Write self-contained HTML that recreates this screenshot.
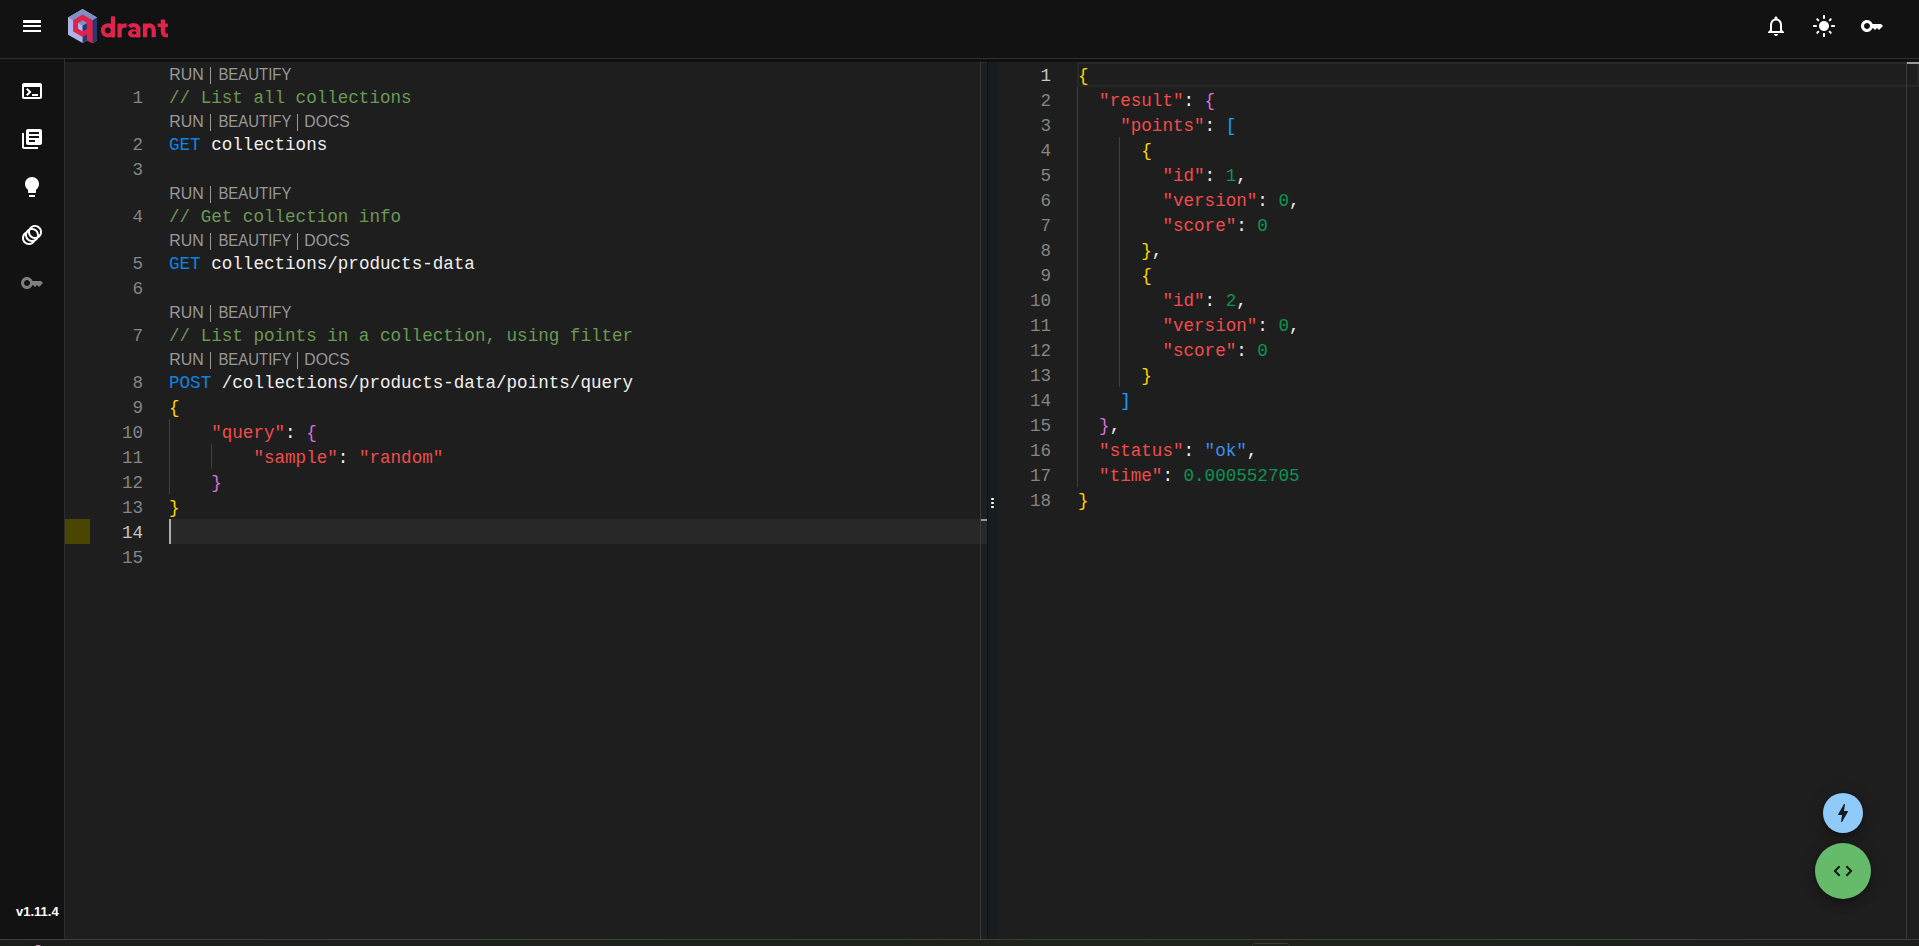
<!DOCTYPE html>
<html>
<head>
<meta charset="utf-8">
<style>
html,body{margin:0;padding:0;}
body{width:1919px;height:946px;overflow:hidden;background:#121212;position:relative;font-family:"Liberation Sans",sans-serif;}
.abs{position:absolute;}
#header{left:0;top:0;width:1919px;height:58px;background:#121212;}
#hline{left:0;top:58px;width:1919px;height:1px;background:#2e2e2e;}
#gap{left:65px;top:59px;width:1854px;height:3px;background:#101010;}
#sidebar{left:0;top:59px;width:64px;height:880px;background:#121212;}
#sline{left:64px;top:59px;width:1px;height:880px;background:#2e2e2e;}
#edL{left:65px;top:62px;width:922px;height:877px;background:#1e1e1e;overflow:hidden;}
#edR{left:998px;top:62px;width:921px;height:877px;background:#1e1e1e;overflow:hidden;}
#gapLR{left:987px;top:62px;width:1px;height:877px;background:#121212;}
#resizer{left:988px;top:62px;width:10px;height:877px;background:#191c1f;}
#bottom{left:0;top:939px;width:1919px;height:7px;background:linear-gradient(90deg,#1b1e1b 0%,#1d211b 40%,#1e231b 60%,#1b1e1b 100%);}
#bline{left:0;top:939px;width:1919px;height:1px;background:#3b403b;}
.code{position:absolute;white-space:pre;font-family:"Liberation Mono",monospace;font-size:17.58px;line-height:25px;height:25px;color:#f0f0f0;}
.ln{position:absolute;white-space:pre;font-family:"Liberation Mono",monospace;font-size:17.58px;line-height:25px;height:25px;color:#858585;text-align:right;width:60px;}
.cm{color:#6a9955}
.kw{color:#0e84e0}
.k{color:#f14c4c}
.sv{color:#3a8ef0}
.nu{color:#0b9552}
.b1{color:#ffd700}
.b2{color:#da70d6}
.b3{color:#179fff}
.act{color:#c6c6c6}
.guide{position:absolute;width:1px;background:#404040;}
svg{position:absolute;overflow:visible;}
</style>
</head>
<body>
<div id="header" class="abs"></div>
<div id="hline" class="abs"></div>
<div id="gap" class="abs"></div>
<div id="sidebar" class="abs"></div>
<div id="sline" class="abs"></div>

<!-- header icons -->
<svg style="left:20px;top:14px" width="24" height="24" viewBox="0 0 24 24"><path fill="#fff" d="M3 18h18v-2H3v2zm0-5h18v-2H3v2zm0-6v2h18V6H3z"/></svg>

<!-- logo -->
<svg style="left:0;top:0" width="200" height="58" viewBox="0 0 200 58">
  <polygon fill="#acb5e8" points="82.6,9 97,17.4 97,40.2 92.7,43 87,40.4 82.6,42.9 68,34.8 68,17.4"/>
  <polygon fill="#8090c6" points="82.6,9 97,17.4 82.6,25.8 68,17.4"/>
  <polygon fill="#26386c" points="97,17.4 97,40.2 92.7,43 87,40.4 82.6,42.9 82.6,25.8"/>
  <path fill="#e0234d" fill-rule="evenodd" d="M82.6,14.6 L92.6,20.2 L92.6,43 L87,40.4 L87,34.3 L82.6,36.9 L73.1,31.4 L73.1,20.2 Z M82.6,20.6 L87,23.2 L87,28.6 L82.6,31.2 L78,28.6 L78,23.2 Z"/>
  <polygon fill="#8090c6" points="82.6,20.6 87,23.2 82.6,25.8 78,23.2"/>
  <polygon fill="#acb5e8" points="78,23.2 82.6,25.8 82.6,31.2 78,28.6"/>
  <polygon fill="#26386c" points="87,23.2 87,28.6 82.6,31.2 82.6,25.8"/>
  <g fill="#dc244c">
    <circle cx="108.1" cy="30.4" r="7.2"/>
    <rect x="110.9" y="16.2" width="4.2" height="21.3" rx="1"/>
    <rect x="117.5" y="23.4" width="4.2" height="14" rx="0.6"/>
    <ellipse cx="133.4" cy="33.4" rx="5.5" ry="4.2"/>
    <rect x="136.2" y="27" width="4.2" height="10.5" rx="0.6"/>
    <rect x="142.9" y="23.4" width="4.2" height="13.9" rx="0.6"/>
    <rect x="151.6" y="29" width="4.2" height="8.3" rx="0.6"/>
    <rect x="160.8" y="19.5" width="4.4" height="13" rx="0.8"/>
    <rect x="157.6" y="23.5" width="10.3" height="3.5" rx="0.6"/>
  </g>
  <circle cx="107.8" cy="30.5" r="2.9" fill="#121212"/>
  <ellipse cx="134.2" cy="32.8" rx="2.2" ry="1.5" fill="#121212"/>
  <g fill="none" stroke="#dc244c" stroke-width="4.2">
    <path d="M119.6,31 C119.6,26.5 122,25.3 126.7,25.3"/>
    <path d="M129.4,26.8 C131.5,24.8 138.3,23.8 138.3,29.5"/>
    <path d="M145,30 C145,23.8 153.7,23.8 153.7,30"/>
    <path d="M163,31.5 C163,35.5 165,35.5 168,35.5"/>
  </g>
</svg>

<svg style="left:1764px;top:14px" width="24" height="24" viewBox="0 0 24 24"><path fill="#fff" d="M12 22c1.1 0 2-.9 2-2h-4c0 1.1.9 2 2 2zm6-6v-5c0-3.07-1.63-5.64-4.5-6.32V4c0-.83-.67-1.5-1.5-1.5s-1.5.67-1.5 1.5v.68C7.64 5.36 6 7.92 6 11v5l-2 2v1h16v-1l-2-2zm-2 1H8v-6c0-2.48 1.51-4.5 4-4.5s4 2.02 4 4.5v6z"/></svg>
<svg style="left:1812px;top:14px" width="24" height="24" viewBox="0 0 24 24"><path fill="#fff" d="M12 7c-2.76 0-5 2.24-5 5s2.24 5 5 5 5-2.24 5-5-2.24-5-5-5zM2 13h2c.55 0 1-.45 1-1s-.45-1-1-1H2c-.55 0-1 .45-1 1s.45 1 1 1zm18 0h2c.55 0 1-.45 1-1s-.45-1-1-1h-2c-.55 0-1 .45-1 1s.45 1 1 1zM11 2v2c0 .55.45 1 1 1s1-.45 1-1V2c0-.55-.45-1-1-1s-1 .45-1 1zm0 18v2c0 .55.45 1 1 1s1-.45 1-1v-2c0-.55-.45-1-1-1s-1 .45-1 1zM5.990 4.580c-.39-.39-1.03-.39-1.41 0-.39.39-.39 1.03 0 1.41l1.06 1.06c.39.39 1.03.39 1.41 0s.39-1.03 0-1.41L5.99 4.58zm12.37 12.37c-.39-.39-1.03-.39-1.41 0-.39.39-.39 1.030 0 1.41l1.06 1.06c.39.39 1.03.39 1.41 0 .39-.39.39-1.03 0-1.41l-1.06-1.06zm1.06-10.96c.39-.39.39-1.03 0-1.41-.39-.39-1.03-.39-1.41 0l-1.06 1.06c-.39.39-.39 1.03 0 1.41s1.03.39 1.41 0l1.06-1.06zM7.05 18.36c.39-.39.39-1.03 0-1.41-.39-.39-1.03-.39-1.41 0l-1.06 1.06c-.39.39-.39 1.03 0 1.41s1.03.39 1.41 0l1.06-1.06z"/></svg>
<svg style="left:1860px;top:14px" width="24" height="24" viewBox="0 0 24 24"><path fill="#fff" d="M21 10h-8.35C11.83 7.67 9.61 6 7 6c-3.31 0-6 2.69-6 6s2.690 6 6 6c2.61 0 4.83-1.67 5.65-4H13l2 2 2-2 2 2 4-4.04L21 10zM7 15c-1.65 0-3-1.35-3-3s1.35-3 3-3 3 1.35 3 3-1.35 3-3 3z"/></svg>

<!-- sidebar icons -->
<svg style="left:20px;top:79px" width="24" height="24" viewBox="0 0 24 24"><path fill="#fff" d="M20 4H4c-1.11 0-2 .9-2 2v12c0 1.1.89 2 2 2h16c1.1 0 2-.9 2-2V6c0-1.1-.89-2-2-2zm0 14H4V8h16v10zm-2-1h-6v-2h6v2zM7.5 17l-1.41-1.41L8.67 13l-2.59-2.59L7.5 9l4 4-4 4z"/></svg>
<svg style="left:20px;top:127px" width="24" height="24" viewBox="0 0 24 24"><path fill="#fff" d="M4 6H2v14c0 1.1.9 2 2 2h14v-2H4V6zm16-4H8c-1.1 0-2 .9-2 2v12c0 1.1.9 2 2 2h12c1.1 0 2-.9 2-2V4c0-1.1-.9-2-2-2zm-1 9H9V9h10v2zm-4 4H9v-2h6v2zm4-8H9V5h10v2z"/></svg>
<svg style="left:20px;top:175px" width="24" height="24" viewBox="0 0 24 24"><path fill="#fff" d="M9 21c0 .55.45 1 1 1h4c.55 0 1-.45 1-1v-1H9v1zm3-19C8.14 2 5 5.14 5 9c0 2.38 1.19 4.47 3 5.74V17c0 .55.45 1 1 1h6c.55 0 1-.45 1-1v-2.26c1.81-1.27 3-3.36 3-5.74 0-3.86-3.14-7-7-7z"/></svg>
<svg style="left:20px;top:223px" width="24" height="24" viewBox="0 0 24 24"><path fill="#fff" fill-rule="evenodd" d="M15 2c-2.71 0-5.05 1.54-6.22 3.78-1.28.67-2.34 1.72-3 3C3.54 9.95 2 12.290 2 15c0 3.87 3.13 7 7 7 2.71 0 5.05-1.54 6.22-3.78 1.28-.67 2.34-1.72 3-3C20.46 14.05 22 11.71 22 9c0-3.87-3.13-7-7-7zM9 20c-2.76 0-5-2.24-5-5 0-1.12.37-2.16 1-3 0 3.87 3.13 7 7 7-.84.63-1.88 1-3 1zm3-3c-2.76 0-5-2.24-5-5 0-1.12.37-2.16 1-3 0 3.86 3.13 6.99 7 7-.84.63-1.88 1-3 1zm4.7-3.3c-.53.19-1.1.3-1.7.3-2.76 0-5-2.24-5-5 0-.6.11-1.17.3-1.7.53-.19 1.1-.3 1.7-.3 2.76 0 5 2.24 5 5 0 .6-.11 1.17-.3 1.7zM12 5A5 5 0 0 1 19 12A7 7 0 0 0 12 5z"/></svg>
<svg style="left:20px;top:271px" width="24" height="24" viewBox="0 0 24 24"><path fill="#7f7f7f" d="M21 10h-8.35C11.83 7.67 9.61 6 7 6c-3.31 0-6 2.69-6 6s2.690 6 6 6c2.61 0 4.83-1.67 5.65-4H13l2 2 2-2 2 2 4-4.04L21 10zM7 15c-1.65 0-3-1.35-3-3s1.35-3 3-3 3 1.35 3 3-1.35 3-3 3z"/></svg>

<div class="abs" style="left:16px;top:903px;font-weight:bold;font-size:13px;color:#fff;line-height:18px;">v1.11.4</div>

<!-- LEFT EDITOR -->
<div id="edL" class="abs"></div>
<div id="gapLR" class="abs"></div>
<div id="resizer" class="abs"></div>
<!-- RIGHT EDITOR -->
<div id="edR" class="abs"></div>
<div class="abs" style="left:169px;top:519px;width:818px;height:25px;background:#282828"></div>
<div class="abs" style="left:65px;top:519px;width:25px;height:25px;background:#4a4500"></div>
<div class="guide" style="left:169px;top:419px;height:75px"></div>
<div class="guide" style="left:211px;top:444px;height:25px"></div>
<div class="ln" style="left:83.00px;top:86px">1</div>
<div class="code" style="left:169px;top:86px"><span class="cm">// List all collections</span></div>
<div class="ln" style="left:83.00px;top:133px">2</div>
<div class="code" style="left:169px;top:133px"><span class="kw">GET</span><span class="w"> collections</span></div>
<div class="ln" style="left:83.00px;top:158px">3</div>
<div class="ln" style="left:83.00px;top:205px">4</div>
<div class="code" style="left:169px;top:205px"><span class="cm">// Get collection info</span></div>
<div class="ln" style="left:83.00px;top:252px">5</div>
<div class="code" style="left:169px;top:252px"><span class="kw">GET</span><span class="w"> collections/products-data</span></div>
<div class="ln" style="left:83.00px;top:277px">6</div>
<div class="ln" style="left:83.00px;top:324px">7</div>
<div class="code" style="left:169px;top:324px"><span class="cm">// List points in a collection, using filter</span></div>
<div class="ln" style="left:83.00px;top:371px">8</div>
<div class="code" style="left:169px;top:371px"><span class="kw">POST</span><span class="w"> /collections/products-data/points/query</span></div>
<div class="ln" style="left:83.00px;top:396px">9</div>
<div class="code" style="left:169px;top:396px"><span class="b1">{</span></div>
<div class="ln" style="left:83.00px;top:421px">10</div>
<div class="code" style="left:169px;top:421px">    <span class="k">"query"</span><span class="w">: </span><span class="b2">{</span></div>
<div class="ln" style="left:83.00px;top:446px">11</div>
<div class="code" style="left:169px;top:446px">        <span class="k">"sample"</span><span class="w">: </span><span class="k">"random"</span></div>
<div class="ln" style="left:83.00px;top:471px">12</div>
<div class="code" style="left:169px;top:471px">    <span class="b2">}</span></div>
<div class="ln" style="left:83.00px;top:496px">13</div>
<div class="code" style="left:169px;top:496px"><span class="b1">}</span></div>
<div class="ln act" style="left:83.00px;top:521px">14</div>
<div class="ln" style="left:83.00px;top:546px">15</div>
<svg class="abs" style="left:0;top:62px" width="400" height="22" viewBox="0 62 400 22"><text x="169.3" y="80.0" fill="#999" font-family="Liberation Sans" font-size="16.6" textLength="34.5" lengthAdjust="spacingAndGlyphs">RUN</text><rect x="210" y="67" width="1" height="17" fill="#999"/><text x="218.4" y="80.0" fill="#999" font-family="Liberation Sans" font-size="16.6" textLength="73.0" lengthAdjust="spacingAndGlyphs">BEAUTIFY</text></svg>
<svg class="abs" style="left:0;top:109px" width="400" height="22" viewBox="0 109 400 22"><text x="169.3" y="127.0" fill="#999" font-family="Liberation Sans" font-size="16.6" textLength="34.5" lengthAdjust="spacingAndGlyphs">RUN</text><rect x="210" y="114" width="1" height="17" fill="#999"/><text x="218.4" y="127.0" fill="#999" font-family="Liberation Sans" font-size="16.6" textLength="73.0" lengthAdjust="spacingAndGlyphs">BEAUTIFY</text><rect x="297" y="114" width="1" height="17" fill="#999"/><text x="304.3" y="127.0" fill="#999" font-family="Liberation Sans" font-size="16.6" textLength="45.5" lengthAdjust="spacingAndGlyphs">DOCS</text></svg>
<svg class="abs" style="left:0;top:181px" width="400" height="22" viewBox="0 181 400 22"><text x="169.3" y="199.0" fill="#999" font-family="Liberation Sans" font-size="16.6" textLength="34.5" lengthAdjust="spacingAndGlyphs">RUN</text><rect x="210" y="186" width="1" height="17" fill="#999"/><text x="218.4" y="199.0" fill="#999" font-family="Liberation Sans" font-size="16.6" textLength="73.0" lengthAdjust="spacingAndGlyphs">BEAUTIFY</text></svg>
<svg class="abs" style="left:0;top:228px" width="400" height="22" viewBox="0 228 400 22"><text x="169.3" y="246.0" fill="#999" font-family="Liberation Sans" font-size="16.6" textLength="34.5" lengthAdjust="spacingAndGlyphs">RUN</text><rect x="210" y="233" width="1" height="17" fill="#999"/><text x="218.4" y="246.0" fill="#999" font-family="Liberation Sans" font-size="16.6" textLength="73.0" lengthAdjust="spacingAndGlyphs">BEAUTIFY</text><rect x="297" y="233" width="1" height="17" fill="#999"/><text x="304.3" y="246.0" fill="#999" font-family="Liberation Sans" font-size="16.6" textLength="45.5" lengthAdjust="spacingAndGlyphs">DOCS</text></svg>
<svg class="abs" style="left:0;top:300px" width="400" height="22" viewBox="0 300 400 22"><text x="169.3" y="318.0" fill="#999" font-family="Liberation Sans" font-size="16.6" textLength="34.5" lengthAdjust="spacingAndGlyphs">RUN</text><rect x="210" y="305" width="1" height="17" fill="#999"/><text x="218.4" y="318.0" fill="#999" font-family="Liberation Sans" font-size="16.6" textLength="73.0" lengthAdjust="spacingAndGlyphs">BEAUTIFY</text></svg>
<svg class="abs" style="left:0;top:347px" width="400" height="22" viewBox="0 347 400 22"><text x="169.3" y="365.0" fill="#999" font-family="Liberation Sans" font-size="16.6" textLength="34.5" lengthAdjust="spacingAndGlyphs">RUN</text><rect x="210" y="352" width="1" height="17" fill="#999"/><text x="218.4" y="365.0" fill="#999" font-family="Liberation Sans" font-size="16.6" textLength="73.0" lengthAdjust="spacingAndGlyphs">BEAUTIFY</text><rect x="297" y="352" width="1" height="17" fill="#999"/><text x="304.3" y="365.0" fill="#999" font-family="Liberation Sans" font-size="16.6" textLength="45.5" lengthAdjust="spacingAndGlyphs">DOCS</text></svg>
<div class="abs" style="left:169px;top:519px;width:2px;height:25px;background:#aeafad"></div>
<div class="abs" style="left:981px;top:62px;width:6px;height:1px;background:#2c2c2c"></div>
<div class="abs" style="left:980px;top:62px;width:1px;height:877px;background:#3a3a3a"></div>
<div class="abs" style="left:981px;top:519px;width:6px;height:2px;background:#9a9a9a"></div>
<div class="abs" style="left:991px;top:498px;width:3px;height:2px;background:#fff;border-radius:1px"></div>
<div class="abs" style="left:991px;top:502px;width:3px;height:2px;background:#fff;border-radius:1px"></div>
<div class="abs" style="left:991px;top:506px;width:3px;height:2px;background:#fff;border-radius:1px"></div>
<div class="abs" style="left:1077px;top:62px;width:838px;height:21px;border:2px solid #282828"></div>
<div class="guide" style="left:1077px;top:87px;height:400px"></div>
<div class="guide" style="left:1119px;top:137px;height:250px"></div>
<div class="ln act" style="left:991.00px;top:64px">1</div>
<div class="code" style="left:1078px;top:64px"><span class="b1">{</span></div>
<div class="ln" style="left:991.00px;top:89px">2</div>
<div class="code" style="left:1078px;top:89px">  <span class="k">"result"</span><span class="w">: </span><span class="b2">{</span></div>
<div class="ln" style="left:991.00px;top:114px">3</div>
<div class="code" style="left:1078px;top:114px">    <span class="k">"points"</span><span class="w">: </span><span class="b3">[</span></div>
<div class="ln" style="left:991.00px;top:139px">4</div>
<div class="code" style="left:1078px;top:139px">      <span class="b1">{</span></div>
<div class="ln" style="left:991.00px;top:164px">5</div>
<div class="code" style="left:1078px;top:164px">        <span class="k">"id"</span><span class="w">: </span><span class="nu">1</span><span class="w">,</span></div>
<div class="ln" style="left:991.00px;top:189px">6</div>
<div class="code" style="left:1078px;top:189px">        <span class="k">"version"</span><span class="w">: </span><span class="nu">0</span><span class="w">,</span></div>
<div class="ln" style="left:991.00px;top:214px">7</div>
<div class="code" style="left:1078px;top:214px">        <span class="k">"score"</span><span class="w">: </span><span class="nu">0</span></div>
<div class="ln" style="left:991.00px;top:239px">8</div>
<div class="code" style="left:1078px;top:239px">      <span class="b1">}</span><span class="w">,</span></div>
<div class="ln" style="left:991.00px;top:264px">9</div>
<div class="code" style="left:1078px;top:264px">      <span class="b1">{</span></div>
<div class="ln" style="left:991.00px;top:289px">10</div>
<div class="code" style="left:1078px;top:289px">        <span class="k">"id"</span><span class="w">: </span><span class="nu">2</span><span class="w">,</span></div>
<div class="ln" style="left:991.00px;top:314px">11</div>
<div class="code" style="left:1078px;top:314px">        <span class="k">"version"</span><span class="w">: </span><span class="nu">0</span><span class="w">,</span></div>
<div class="ln" style="left:991.00px;top:339px">12</div>
<div class="code" style="left:1078px;top:339px">        <span class="k">"score"</span><span class="w">: </span><span class="nu">0</span></div>
<div class="ln" style="left:991.00px;top:364px">13</div>
<div class="code" style="left:1078px;top:364px">      <span class="b1">}</span></div>
<div class="ln" style="left:991.00px;top:389px">14</div>
<div class="code" style="left:1078px;top:389px">    <span class="b3">]</span></div>
<div class="ln" style="left:991.00px;top:414px">15</div>
<div class="code" style="left:1078px;top:414px">  <span class="b2">}</span><span class="w">,</span></div>
<div class="ln" style="left:991.00px;top:439px">16</div>
<div class="code" style="left:1078px;top:439px">  <span class="k">"status"</span><span class="w">: </span><span class="sv">"ok"</span><span class="w">,</span></div>
<div class="ln" style="left:991.00px;top:464px">17</div>
<div class="code" style="left:1078px;top:464px">  <span class="k">"time"</span><span class="w">: </span><span class="nu">0.000552705</span></div>
<div class="ln" style="left:991.00px;top:489px">18</div>
<div class="code" style="left:1078px;top:489px"><span class="b1">}</span></div>
<div class="abs" style="left:1906px;top:62px;width:1px;height:877px;background:#3a3a3a"></div>
<div class="abs" style="left:1907px;top:62px;width:12px;height:2px;background:#9a9a9a"></div>
<div class="abs" style="left:1823px;top:793px;width:40px;height:40px;border-radius:50%;background:#90caf9;box-shadow:0 3px 5px -1px rgba(0,0,0,.2),0 6px 10px 0 rgba(0,0,0,.14),0 1px 18px 0 rgba(0,0,0,.12)"></div>
<svg style="left:1831px;top:801px" width="24" height="24" viewBox="0 0 24 24"><path fill="rgba(0,0,0,0.87)" d="M11 21h-1l1-7H7.5c-.58 0-.57-.32-.38-.66.19-.34.05-.08.07-.12C8.48 10.94 10.42 7.54 13 3h1l-1 7h3.5c.49 0 .56.33.47.51l-.07.15C12.96 17.55 11 21 11 21z"/></svg>
<div class="abs" style="left:1815px;top:843px;width:56px;height:56px;border-radius:50%;background:#66bb6a;box-shadow:0 3px 5px -1px rgba(0,0,0,.2),0 6px 10px 0 rgba(0,0,0,.14),0 1px 18px 0 rgba(0,0,0,.12)"></div>
<svg style="left:1831px;top:859px" width="24" height="24" viewBox="0 0 24 24"><path fill="none" stroke="rgba(0,0,0,0.87)" stroke-width="2" d="M8.6 7.2 3.9 12l4.7 4.8M15.4 7.2 20.1 12l-4.7 4.8"/></svg>
<div class="abs" style="left:34px;top:945px;width:8px;height:8px;border-radius:50%;background:#f0a8c4;z-index:2"></div>
<div class="abs" style="left:1252px;top:943px;width:38px;height:8px;border-radius:4px;border-top:1px solid #3a3d3a;box-sizing:border-box;z-index:2"></div>

<div id="bottom" class="abs"></div>
<div id="bline" class="abs"></div>
</body>
</html>
